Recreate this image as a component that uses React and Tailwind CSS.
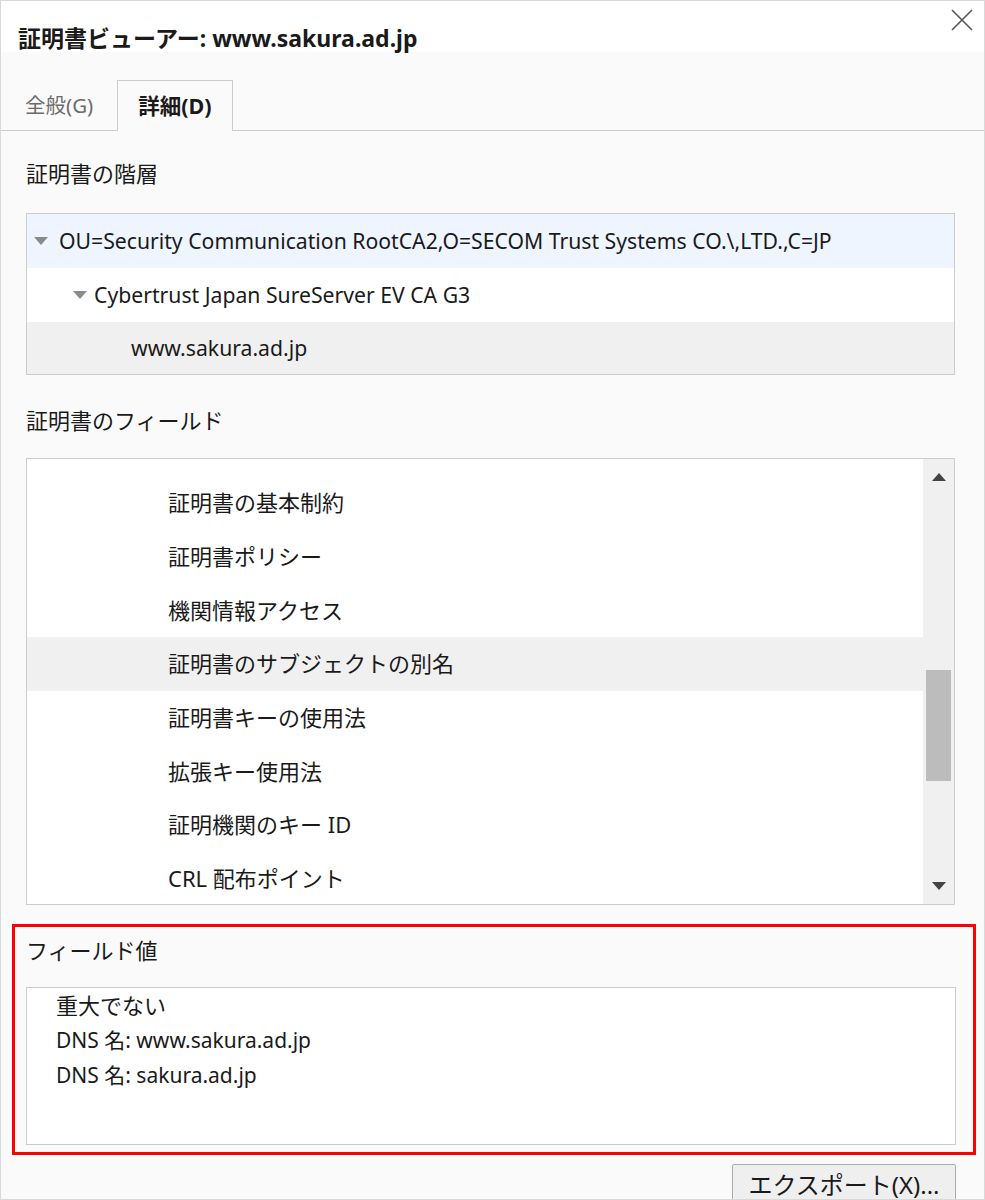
import React from 'react';

const FONT = { fontFamily: '"Segoe UI", "Noto Sans", "Noto Sans CJK JP", sans-serif' };

const fields = [
  '証明書の基本制約',
  '証明書ポリシー',
  '機関情報アクセス',
  '証明書のサブジェクトの別名',
  '証明書キーの使用法',
  '拡張キー使用法',
  '証明機関のキー ID',
  'CRL 配布ポイント',
];

function Caret() {
  return (
    <svg width="14" height="9" viewBox="0 0 14 9" className="shrink-0">
      <path d="M0 0 L14 0 L7 8 Z" fill="#8a8a8a" />
    </svg>
  );
}

export default function App() {
  return (
    <div className="w-[985px] h-[1200px] overflow-hidden border border-[#d9d9d9] bg-[#fafafa] text-[#1a1a1a] flex flex-col" style={FONT}>
      {/* title bar */}
      <div className="h-[51px] bg-white relative shrink-0">
        <h1 className="absolute left-[17px] top-[21px] text-[23px] font-bold leading-[32px]">
          証明書ビューアー: www.sakura.ad.jp
        </h1>
        <svg className="absolute right-[11px] top-[8px]" width="22" height="22" viewBox="0 0 22 22">
          <path d="M1 1 L21 21 M21 1 L1 21" stroke="#555" strokeWidth="1.6" />
        </svg>
      </div>

      {/* tabs */}
      <div className="h-[79px] shrink-0 flex items-end border-b border-[#cccccc] pl-[24px]">
        <div className="w-[92px] h-[50px] flex items-center text-[20.5px] text-[#6b6b6b]">全般(G)</div>
        <div className="w-[116px] h-[51px] -mb-px border border-b-0 border-[#cccccc] bg-[#fafafa] flex items-center justify-center text-[21.5px] font-bold">
          詳細(D)
        </div>
      </div>

      <div className="px-[25px] pr-[29px] shrink-0">
        {/* hierarchy */}
        <div className="h-[82px] flex items-center text-[22px] pt-[3px]">証明書の階層</div>
        <div className="border border-[#cccccc] bg-white text-[21.2px]">
          <div className="h-[54px] bg-[#eef5fe] flex items-center gap-[11px] pl-[7px]">
            <Caret />
            <span>OU=Security Communication RootCA2,O=SECOM Trust Systems CO.\,LTD.,C=JP</span>
          </div>
          <div className="h-[54px] flex items-center gap-[7px] pl-[46px]">
            <Caret />
            <span>Cybertrust Japan SureServer EV CA G3</span>
          </div>
          <div className="h-[52px] bg-[#f0f0f0] flex items-center pl-[104px]">www.sakura.ad.jp</div>
        </div>

        {/* fields */}
        <div className="h-[83px] flex items-center text-[22px] pt-[7px]">証明書のフィールド</div>
        <div className="h-[447px] border border-[#cccccc] bg-white flex text-[22px]">
          <div className="flex-1 pt-[17px]">
            {fields.map((f, i) => (
              <div
                key={f}
                className={`h-[53.7px] flex items-center pl-[141px] ${i === 3 ? 'bg-[#f0f0f0]' : ''}`}
              >
                {f}
              </div>
            ))}
          </div>
          <div className="w-[31px] bg-[#f0f0f0] flex flex-col items-center">
            <div className="h-[36px] flex items-center justify-center">
              <svg width="14" height="8" viewBox="0 0 14 8"><path d="M0 8 L14 8 L7 0 Z" fill="#444" /></svg>
            </div>
            <div className="mt-[175px] w-[25px] h-[111px] bg-[#bcbcbc]" />
            <div className="flex-1" />
            <div className="h-[36px] flex items-center justify-center">
              <svg width="14" height="8" viewBox="0 0 14 8"><path d="M0 0 L14 0 L7 8 Z" fill="#444" /></svg>
            </div>
          </div>
        </div>
      </div>

      {/* field value, highlighted */}
      <div className="shrink-0 mt-[19px] ml-[11px] mr-[8px] h-[231px] border-[3px] border-[#ff0000] pl-[11px] pr-[17px] pb-[7px] flex flex-col">
        <div className="h-[45px] shrink-0 flex items-center text-[22px] pt-[1px]">フィールド値</div>
        <div className="mt-[15px] flex-1 border border-[#cccccc] bg-white pl-[29px] text-[21px] leading-[35px]">
          <div className="text-[22px]">重大でない</div>
          <div>DNS 名: www.sakura.ad.jp</div>
          <div>DNS 名: sakura.ad.jp</div>
        </div>
      </div>

      <div className="shrink-0 flex justify-end pr-[28px] mt-[9px]">
        <button className="w-[224px] h-[50px] border border-[#adadad] rounded-[2px] bg-[#efefef] text-[24px] flex items-start justify-center pt-[2px]">
          エクスポート(X)...
        </button>
      </div>
    </div>
  );
}
